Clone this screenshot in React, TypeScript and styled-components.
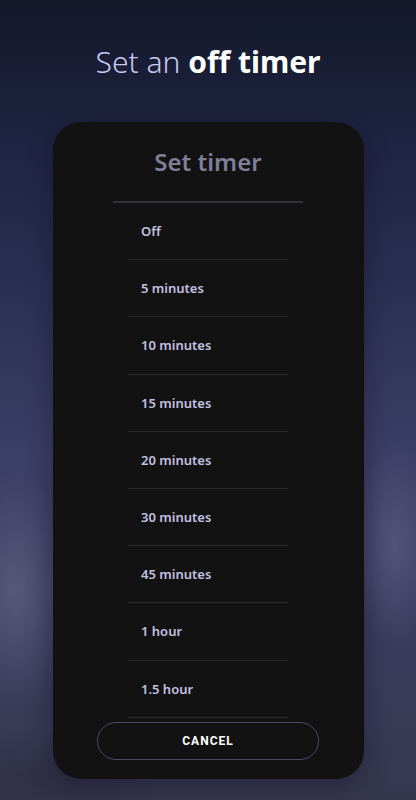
import React from 'react';
import styled, { createGlobalStyle } from 'styled-components';

const GlobalStyle = createGlobalStyle`
  html, body {
    margin: 0;
    padding: 0;
    background: #1a1f38;
  }
  * {
    box-sizing: border-box;
  }
`;

const Page = styled.div`
  width: 416px;
  height: 800px;
  overflow: hidden;
  display: flex;
  flex-direction: column;
  align-items: center;
  font-family: 'Noto Sans', 'Open Sans', sans-serif;
  background:
    radial-gradient(ellipse 60px 120px at 15px 590px, rgba(105, 102, 135, 0.65), transparent 100%),
    radial-gradient(ellipse 45px 100px at 395px 545px, rgba(100, 98, 135, 0.6), transparent 100%),
    radial-gradient(ellipse 120px 50px at 40px 780px, rgba(40, 40, 62, 0.5), transparent 100%),
    linear-gradient(180deg, #121829 0%, #1f2442 18%, #2c3154 38%, #3c3f66 58%, #3a3c5c 80%, #36374f 100%);
`;

const Headline = styled.h1`
  margin: 42px 0 0;
  font-size: 30px;
  line-height: 40px;
  letter-spacing: 0;
  color: #c9c8f2;
  font-weight: 300;
`;

const Strong = styled.span`
  color: #ffffff;
  font-weight: 700;
`;

const Card = styled.div`
  margin-top: 40px;
  width: 311px;
  height: 657px;
  background: #121212;
  border-radius: 28px;
  display: flex;
  flex-direction: column;
  align-items: center;
  box-shadow: 0 8px 24px rgba(10, 10, 20, 0.35);
`;

const CardTitle = styled.h2`
  margin: 0;
  height: 81px;
  width: 190px;
  display: flex;
  align-items: center;
  justify-content: center;
  padding-top: 0;
  font-size: 24px;
  font-weight: 600;
  color: #7f7e97;
  border-bottom: 2px solid #333237;
`;

const List = styled.ul`
  list-style: none;
  margin: 0;
  padding: 0;
  width: 160px;
`;

const Item = styled.li`
  height: 57.2px;
  display: flex;
  align-items: center;
  padding: 0 0 0 13px;
  font-size: 13px;
  font-weight: 600;
  color: #c3c1e0;
  border-bottom: 1px solid #2a2a2d;
`;

const CancelButton = styled.button`
  margin-top: 4px;
  width: 222px;
  height: 38px;
  border-radius: 19px;
  border: 1.5px solid #4b4962;
  background: transparent;
  color: #ffffff;
  font-family: Roboto, 'Liberation Sans', sans-serif;
  font-size: 12px;
  font-weight: 700;
  letter-spacing: 1px;
`;

const options = [
  'Off',
  '5 minutes',
  '10 minutes',
  '15 minutes',
  '20 minutes',
  '30 minutes',
  '45 minutes',
  '1 hour',
  '1.5 hour',
];

const App = (): React.ReactElement => {
  return (
    <Page>
      <GlobalStyle />
      <Headline>
        Set an <Strong>off timer</Strong>
      </Headline>
      <Card>
        <CardTitle>Set timer</CardTitle>
        <List>
          {options.map((o) => (
            <Item key={o}>{o}</Item>
          ))}
        </List>
        <CancelButton>CANCEL</CancelButton>
      </Card>
    </Page>
  );
};

export default App;
